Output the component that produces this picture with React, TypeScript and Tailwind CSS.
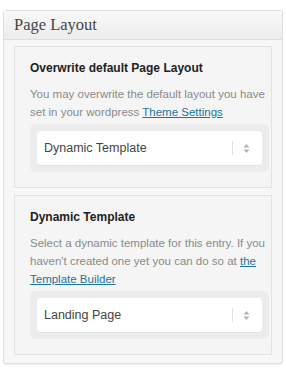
import React from "react";

const sans = { fontFamily: '"Liberation Sans", Arial, sans-serif' };

function Arrows() {
  return (
    <svg width="7" height="11" viewBox="0 0 7 11" className="text-[#b4b4b4]">
      <path d="M3.5 1 L6.5 4.5 H0.5 Z" fill="currentColor" />
      <path d="M3.5 10 L6.5 6.5 H0.5 Z" fill="currentColor" />
    </svg>
  );
}

function SelectBox({ value }: { value: string }) {
  return (
    <div className="rounded-[6px] bg-[#ececec] p-[7px]">
      <div className="flex h-[34px] items-center rounded-[4px] bg-white pl-[7px] pr-[12px] shadow-[0_1px_1px_rgba(0,0,0,0.04)]">
        <span className="flex-1 text-[12.5px] text-[#444]">{value}</span>
        <span className="mr-[10px] h-[14px] w-px bg-[#e2e2e2]" />
        <Arrows />
      </div>
    </div>
  );
}

function Section({
  title,
  children,
  value,
}: {
  title: string;
  children: React.ReactNode;
  value: string;
}) {
  return (
    <div className="border border-[#e3e3e3] bg-[#f5f5f5] pl-[15px] pr-[2px] pt-[12px] pb-[15px]">
      <h3 className="text-[12px] font-bold leading-[18px] text-[#222]">{title}</h3>
      <p className="mt-[8px] whitespace-nowrap text-[11.5px] leading-[18px] text-[#8a8a8a]">
        {children}
      </p>
      <div className="mt-[3px]">
        <SelectBox value={value} />
      </div>
    </div>
  );
}

export default function App() {
  return (
    <div className="h-[369px] w-[286px] bg-white pt-[10px] pl-[3px] pr-[3px]" style={sans}>
      <div className="rounded-[3px] border border-[#dfdfdf] bg-[#f7f7f7] shadow-[0_1px_0_#f0f0f0]">
        <div className="flex h-[29px] items-center border-b border-[#dfdfdf] bg-gradient-to-b from-[#f9f9f9] to-[#ececec] px-[10px]">
          <span
            className="text-[16.5px] text-[#464646]"
            style={{ fontFamily: 'Georgia, "Liberation Serif", serif' }}
          >
            Page Layout
          </span>
        </div>
        <div className="flex flex-col gap-[7px] px-[10px] pt-[6px] pb-[8px]">
          <Section title="Overwrite default Page Layout" value="Dynamic Template">
            You may overwrite the default layout you have
            <br />
            set in your wordpress <a className="text-[#21759b] underline">Theme Settings</a>
          </Section>
          <Section title="Dynamic Template" value="Landing Page">
            Select a dynamic template for this entry. If you
            <br />
            haven't created one yet you can do so at{" "}
            <a className="text-[#21759b] underline">
              the
              <br />
              Template Builder
            </a>
          </Section>
        </div>
      </div>
    </div>
  );
}
